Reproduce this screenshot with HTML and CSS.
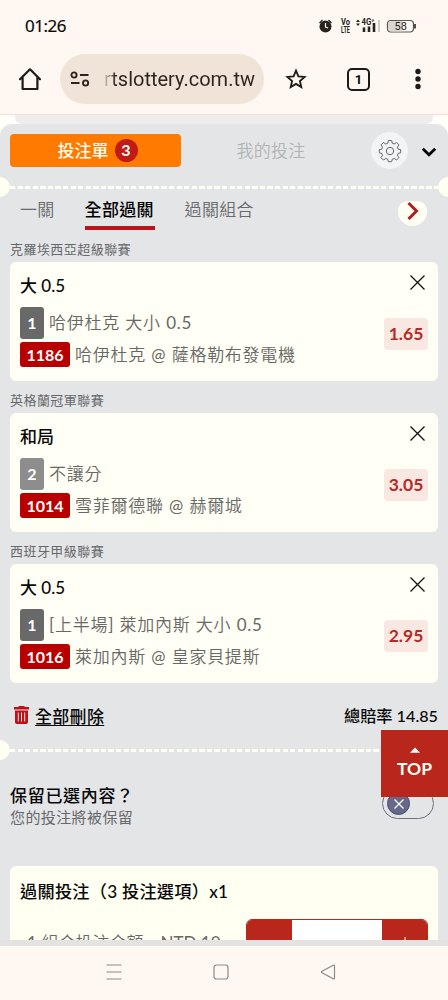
FILE: index.html
```html
<!DOCTYPE html>
<html lang="zh-Hant">
<head>
<meta charset="utf-8">
<meta name="viewport" content="width=device-width, initial-scale=1">
<title>投注單</title>
<link rel="stylesheet" href="styles.css">
</head>
<body>
<div class="phone">
  <header class="chrome">
    <div class="status">
      <span class="clock">01:26</span>
      <svg class="status-icons" width="100" height="20" viewBox="0 0 100 20">
        <circle cx="8.500" cy="10.500" r="6" fill="#28231f"/>
        <path d="M2.500 7L5.500 4M14.500 7L11.500 4" stroke="#28231f" stroke-width="1.300" fill="none"/>
        <path d="M8.500 7v4l2.600 1" stroke="#fff8f2" stroke-width="1.200" fill="none"/>
        <text x="24" y="9.300" class="tiny" textLength="9" lengthAdjust="spacingAndGlyphs">Vo</text>
        <text x="24" y="16.600" class="tiny" textLength="9" lengthAdjust="spacingAndGlyphs">LTE</text>
        <path d="M39 6l2-2.500 2 2.500zM39 7.500l2 2.500 2-2.500z" fill="#28231f"/>
        <text x="44.500" y="9.300" class="tiny" textLength="13" lengthAdjust="spacingAndGlyphs">4G⁺</text>
        <path d="M47 11.500v4.500M52 10.500v5.500M57 7v9" stroke="#28231f" stroke-width="2.600"/>
        <path d="M62 4v12" stroke="#d3ccc6" stroke-width="2"/>
        <rect x="70.500" y="4.500" width="26" height="11.500" rx="3.500" fill="#fff8f2" stroke="#5b5550" stroke-width="1.200"/>
        <path d="M74 5.100h11v10.300H74q-2.800 0-2.800-3V8q0-2.900 2.800-2.900z" fill="#ddd6d0"/>
        <path d="M98 8v4.500" stroke="#28231f" stroke-width="1.600"/>
        <text x="77.500" y="14" class="battery">58</text>
      </svg>
    </div>
    <div class="toolbar">
      <svg class="home" width="24" height="24" viewBox="0 0 24 24"><path d="M2 12.200L12 2.300l10 9.900M4.600 10v12h14.800V10" fill="none" stroke="#1e1a17" stroke-width="2.200" stroke-linejoin="round" stroke-linecap="round"/></svg>
      <div class="address">
        <svg width="20" height="16" viewBox="0 0 20 16"><g fill="none" stroke="#2c251f" stroke-width="1.900"><circle cx="4" cy="4" r="2.600"/><path d="M10 4h8.500M1 12h8.500"/><circle cx="15.600" cy="12" r="2.600"/></g></svg>
        <span class="url">rtslottery.com.tw</span>
      </div>
      <svg class="star" width="22" height="22" viewBox="0 0 22 22"><path d="M11 2.600l2.400 5.800 6.200.5-4.700 4.100 1.400 6.100-5.300-3.200-5.300 3.200 1.400-6.100L2.400 8.900l6.200-.5z" fill="none" stroke="#1e1a17" stroke-width="1.800"/></svg>
      <span class="tabs-count">1</span>
      <svg class="more" width="8" height="24" viewBox="0 0 8 24"><g fill="#1e1a17"><circle cx="4" cy="4.500" r="2.700"/><circle cx="4" cy="12" r="2.700"/><circle cx="4" cy="19.500" r="2.700"/></g></svg>
    </div>
  </header>

  <main class="page">
    <div class="peek"></div>
    <section class="slip">
      <div class="slip-head">
        <div class="tab-active"><span>投注單</span><b>3</b></div>
        <div class="tab-other">我的投注</div>
        <div class="gear">
          <svg width="24" height="24" viewBox="0 0 24 24" fill="none" stroke="#66696d" stroke-width="1" stroke-linejoin="round"><circle cx="12" cy="12" r="3.700"/><path d="M10.300 1.500h3.400l.5 2.700 2 .8 2.400-1.500 2.400 2.400L19.400 8.200l.8 2 2.500.4v3.200l-2.500.5-.8 2 1.500 2.300-2.300 2.400-2.400-1.500-2 .8-.5 2.400h-3.400l-.5-2.400-2-.8-2.400 1.500L3 18.600l1.500-2.300-.8-2-2.400-.5v-3.200l2.400-.4.8-2L3 5.900l2.400-2.400L7.800 5l2-.8z"/></svg>
        </div>
        <svg class="chevron" width="16" height="10" viewBox="0 0 16 10"><path d="M1.800 1.800L8 7.700l6.200-5.900" fill="none" stroke="#000" stroke-width="2.800"/></svg>
      </div>
      <div class="tear"></div>
      <nav class="modes">
        <span class="mode one">一關</span>
        <span class="mode current">全部過關</span>
        <span class="mode combo">過關組合</span>
        <span class="next"><svg width="12" height="18" viewBox="0 0 12 18"><path d="M1.500 1L9.500 9l-8 8" fill="none" stroke="#a92022" stroke-width="3"/></svg></span>
      </nav>

      <h2 class="league">克羅埃西亞超級聯賽</h2>
      <article class="bet">
        <div class="bet-main">
          <h3 class="pick-title">大 0.5</h3>
          <p class="pick"><b class="num">1</b><span>哈伊杜克 大小 <i>0.5</i></span></p>
          <p class="pick match"><b class="code">1186</b><span>哈伊杜克 <i>@</i> 薩格勒布發電機</span></p>
        </div>
        <div class="bet-side"><svg width="17" height="17" viewBox="0 0 17 17"><path d="M1.500 1.500l14 14M15.500 1.500l-14 14" stroke="#111" stroke-width="1.300"/></svg><b class="odds">1.65</b></div>
      </article>
      <h2 class="league">英格蘭冠軍聯賽</h2>
      <article class="bet">
        <div class="bet-main">
          <h3 class="pick-title">和局</h3>
          <p class="pick"><b class="num light">2</b><span>不讓分</span></p>
          <p class="pick match"><b class="code">1014</b><span>雪菲爾德聯 <i>@</i> 赫爾城</span></p>
        </div>
        <div class="bet-side"><svg width="17" height="17" viewBox="0 0 17 17"><path d="M1.500 1.500l14 14M15.500 1.500l-14 14" stroke="#111" stroke-width="1.300"/></svg><b class="odds">3.05</b></div>
      </article>
      <h2 class="league">西班牙甲級聯賽</h2>
      <article class="bet">
        <div class="bet-main">
          <h3 class="pick-title">大 0.5</h3>
          <p class="pick"><b class="num">1</b><span><i>[</i>上半場<i>]</i> 萊加內斯 大小 <i>0.5</i></span></p>
          <p class="pick match"><b class="code">1016</b><span>萊加內斯 <i>@</i> 皇家貝提斯</span></p>
        </div>
        <div class="bet-side"><svg width="17" height="17" viewBox="0 0 17 17"><path d="M1.500 1.500l14 14M15.500 1.500l-14 14" stroke="#111" stroke-width="1.300"/></svg><b class="odds">2.95</b></div>
      </article>

      <div class="summary">
        <svg width="17" height="20" viewBox="0 0 16 20"><path d="M5 2V.9h6V2h4.500v2.500H.5V2zM1.500 5.500h13V17q0 2-2 2h-9q-2 0-2-2z" fill="#bd1017"/><path d="M4.800 7.500v9M8 7.500v9M11.200 7.500v9" stroke="#e4e5e7" stroke-width="1"/></svg>
        <a class="clear">全部刪除</a>
        <span class="total">總賠率 14.85</span>
      </div>
      <div class="tear"></div>

      <div class="keep">
        <div>
          <div class="keep-title">保留已選內容？</div>
          <div class="keep-note">您的投注將被保留</div>
        </div>
        <div class="switch"><span class="knob"><svg width="12" height="12" viewBox="0 0 12 12"><path d="M1.500 1.500l9 9M10.500 1.500l-9 9" stroke="#fff" stroke-width="1.200"/></svg></span></div>
      </div>

      <article class="stake">
        <h3 class="stake-title">過關投注（3 投注選項）x1</h3>
        <div class="stake-row">
          <span class="stake-label"><i>1</i> 組合投注金額</span><span class="stake-money"><i>NTD 10</i></span>
          <div class="stepper"><span class="step"></span><span class="amount"></span><span class="step plus"><svg width="12" height="12" viewBox="0 0 12 12"><path d="M6 0v12M0 6h12" stroke="#fff" stroke-width="1"/></svg></span></div>
        </div>
      </article>
    </section>
    <button class="top"><svg width="12" height="6" viewBox="0 0 12 6"><path d="M1 5.800L6 .5l5 5.300z" fill="#fff"/></svg><span>TOP</span></button>
  </main>

  <footer class="navbar">
    <svg width="18" height="18" viewBox="0 0 18 18"><path d="M1.500 2h15M1.500 9h15M1.500 16h15" stroke="#8f8984" stroke-width="1.200"/></svg>
    <svg width="18" height="18" viewBox="0 0 18 18"><rect x="2" y="2" width="14" height="14" rx="2.500" fill="none" stroke="#8f8984" stroke-width="1.200"/></svg>
    <svg width="18" height="18" viewBox="0 0 18 18"><path d="M3 8.200L14.300 2.200q1.200-.5 1.200.7v12.200q0 1.200-1.200.7L3 9.800q-1.200-.8 0-1.600z" fill="none" stroke="#8f8984" stroke-width="1.200"/></svg>
  </footer>
</div>
</body>
</html>
```
FILE: styles.css
```css
* { box-sizing: border-box; }
body { margin: 0; font-family: Lato, "Noto Sans CJK TC", sans-serif; color: #090909; }
h2, h3, p { margin: 0; font-weight: 400; }
i { font-style: normal; font-weight: 400; }
svg { display: block; flex: none; }
.phone { width: 448px; height: 1000px; display: flex; flex-direction: column; overflow: hidden; background: #fff8f2; white-space: nowrap; }

.chrome { height: 115px; flex: none; border-bottom: 1px solid #f3ded2; }
.status { height: 50px; display: flex; justify-content: space-between; align-items: center; padding: 2px 31px 0 25px; }
.clock { font: 400 17px/20px "Noto Sans", Roboto, sans-serif; letter-spacing: -.5px; -webkit-text-stroke: .2px currentColor; }
.tiny { font: 700 8.500px Roboto, sans-serif; fill: #28231f; }
.battery { font: 400 11px Roboto, sans-serif; fill: #28231f; }
.toolbar { height: 58px; display: flex; align-items: center; padding: 0 0 0 18px; }
.address { width: 204px; height: 50px; margin-left: 18px; border-radius: 25px; background: #f0e3d8; display: flex; align-items: center; padding-left: 10px; }
.url { margin-left: 14px; font: 400 20px/26px Roboto, sans-serif; background: linear-gradient(90deg, #d8ccc1, #2b241f 12px); -webkit-background-clip: text; background-clip: text; color: transparent; }
.star { margin-left: 21px; }
.tabs-count { width: 23px; height: 23px; margin-left: 40px; border: 2px solid #1e1a17; border-radius: 5px; text-align: center; font: 700 13px/19px Roboto, sans-serif; }
.more { margin-left: 44px; }

.page { height: 831px; flex: none; position: relative; overflow: hidden; background: #fffefa; border-bottom: 6px solid #e5e3e2; }
.peek { height: 9px; margin: 0 15px; background: #ededee; border-radius: 0 0 7px 7px; }
.slip { background: #e4e5e7; border-radius: 12px 12px 0 0; height: 830px; }
.slip-head { height: 53px; display: flex; align-items: center; padding: 0 10px; }
.tab-active { width: 171px; height: 33px; border-radius: 4px; background: #ff7a00; color: #fffef2; display: flex; align-items: center; justify-content: center; gap: 6px; font-size: 17px; line-height: 20px; font-weight: 500; padding: 0 0 1px 4px; }
.tab-active span { margin-top: 1px; }
.tab-active b { width: 23px; height: 23px; border-radius: 50%; background: #c11b17; text-align: center; font-size: 16px; line-height: 22px; font-weight: 700; }
.tab-other { width: 180px; text-align: center; font-size: 17px; letter-spacing: .3px; color: #b0b2b5; font-weight: 350; padding-bottom: 3px; }
.gear { width: 37px; height: 37px; margin-left: 10px; border-radius: 50%; background: #f3f4f5; display: grid; place-items: center; }
.chevron { margin-left: 13px; margin-top: 2px; }

.tear { height: 20px; background:
  radial-gradient(circle at 0 50%, #fffff2 9.500px, transparent 10px),
  radial-gradient(circle at 100% 50%, #fffff2 9.500px, transparent 10px),
  repeating-linear-gradient(90deg, #fffff5 0 5.300px, transparent 5.300px 7.570px) 10px 9px / 428px 3px no-repeat; }

.modes { height: 43px; display: flex; align-items: flex-start; padding: 0 20px; font-size: 17px; line-height: 25px; }
.mode { color: #686a6d; font-weight: 350; letter-spacing: .3px; height: 33px; }
.current { margin-left: 30px; border-bottom: 4px solid #b9151b; color: #000; font-weight: 500; width: 70px; }
.combo { margin-left: 30px; }
.next { width: 29px; height: 25px; margin: 4px 1px 0 auto; border-radius: 10px 10px 15px 15px; background: #fffff2; display: flex; justify-content: center; padding-top: 1px; }

.league { height: 22px; padding-left: 10px; font-size: 13px; line-height: 18px; letter-spacing: .45px; color: #66686b; }
.bet { height: 119px; margin: 0 10px 10px; padding: 12px 10px 0; border-radius: 6px; background: #fffff5; display: flex; justify-content: space-between; }
.pick-title { font-size: 17px; line-height: 24px; font-weight: 500; height: 33px; }
.pick { display: flex; align-items: center; height: 32px; gap: 5px; font-size: 17px; font-weight: 350; letter-spacing: .74px; color: #686866; }
.pick span { line-height: 24px; padding-bottom: 1px; }
.pick b { color: #fff; font-size: 16px; letter-spacing: 0; font-weight: 700; text-align: center; border-radius: 3px; }
.num { width: 24px; height: 32px; line-height: 32px; background: #696969; }
.num.light { background: #8d8d8d; }
.match { height: 25px; margin-top: 3px; }
.match span { padding-bottom: 0; }
.code { width: 50px; height: 25px; line-height: 25px; background: #b90000; }
.bet-side { display: flex; flex-direction: column; align-items: flex-end; }
.bet-side svg { margin-right: 2px; }
.odds { width: 44px; height: 32px; margin-top: 27px; border-radius: 4px; background: #f9e7e2; color: #b52b25; text-align: center; font-size: 17.500px; line-height: 32px; }

.summary { height: 47px; display: flex; align-items: center; padding: 0 10px 3px 13px; font-size: 17px; font-weight: 500; }
.clear { margin-left: 5px; text-decoration: underline; text-underline-offset: 2px; letter-spacing: .3px; }
.total { margin-left: auto; font-size: 16.200px; }

.keep { height: 106px; display: flex; justify-content: space-between; padding: 24px 14px 0 10px; }
.keep-title { font-size: 17px; line-height: 24px; font-weight: 500; letter-spacing: .7px; }
.keep-note { font-size: 15px; line-height: 18px; letter-spacing: .4px; color: #66686c; }
.switch { width: 52px; height: 31px; margin-top: 4px; padding: 3px 4px; border: 1px solid #70717f; border-radius: 16px; }
.knob { display: grid; place-items: center; width: 23px; height: 23px; border-radius: 50%; background: #67688a; border: 1px solid #4c4d68; }

.stake { height: 150px; margin: 0 10px; padding: 14px 10px 0; border-radius: 6px; background: #fffff2; }
.stake-title { font-size: 17.200px; line-height: 24px; font-weight: 500; letter-spacing: .25px; }
.stake-row { display: flex; padding: 15px 0 0 7px; font-size: 17px; line-height: 48px; color: #686866; font-weight: 350; }
.stake-money { margin-left: 17px; }
.stepper { width: 182px; height: 48px; margin-left: auto; border: 1px solid #b8261c; border-radius: 6px; display: flex; overflow: hidden; }
.step { width: 45px; background: #b8261c; display: grid; place-items: center; }
.amount { flex: 1; background: #fff; }

.top { position: absolute; right: 0; top: 615px; width: 67px; height: 67px; border: 0; padding: 1px 0 0; background: #b8261c; color: #fffef5; display: flex; flex-direction: column; align-items: center; justify-content: center; gap: 4px; font: 700 17.500px/24px Lato, sans-serif; }

.navbar { height: 54px; display: flex; justify-content: center; align-items: center; gap: 89px; padding: 0 7px 2px 0; }
```
